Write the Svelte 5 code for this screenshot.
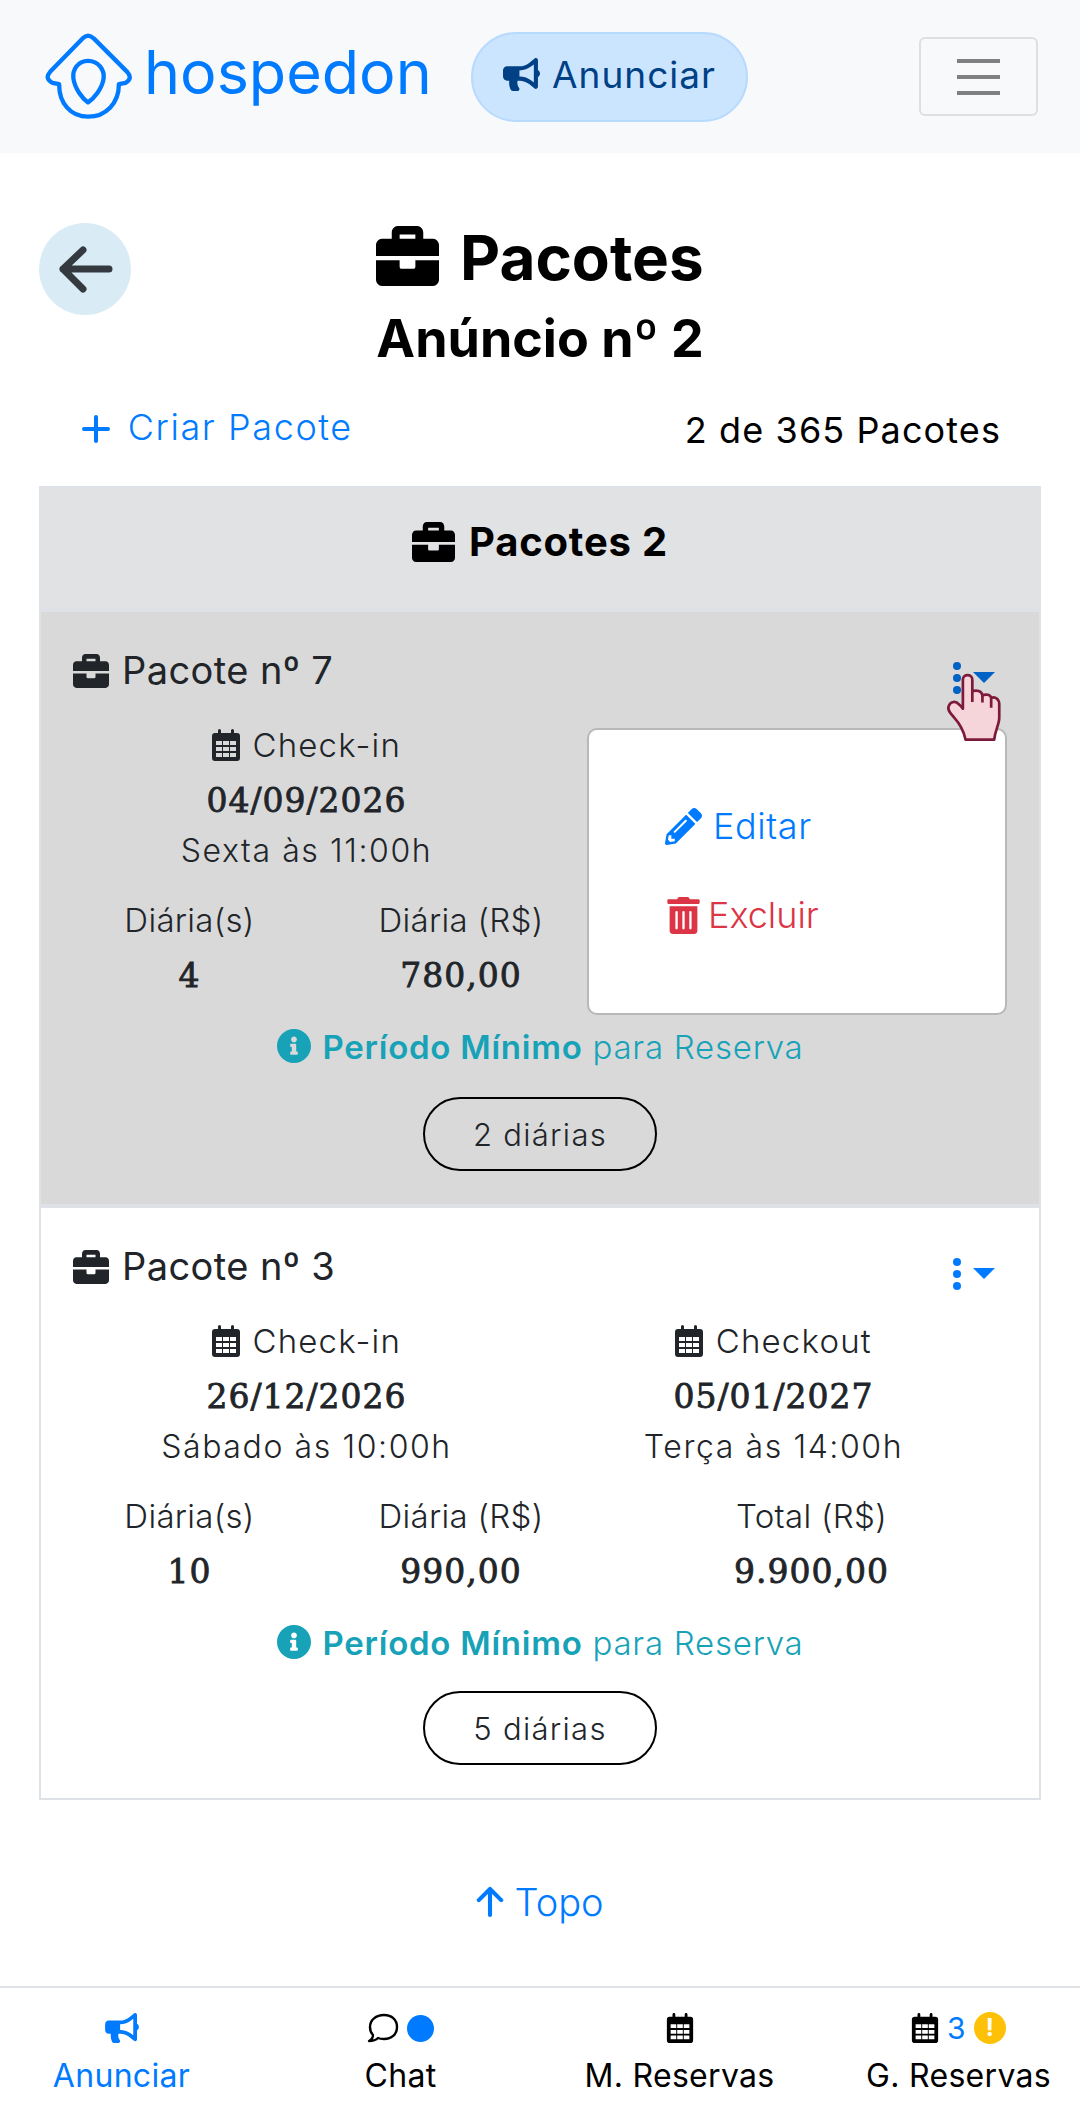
<script>
  const briefcase = "M320 336c0 8.84-7.16 16-16 16h-96c-8.84 0-16-7.16-16-16v-48H0v144c0 25.6 22.4 48 48 48h416c25.6 0 48-22.4 48-48V288H320v48zm144-208h-80V80c0-25.6-22.4-48-48-48H176c-25.6 0-48 22.4-48 48v48H48c-25.6 0-48 22.4-48 48v80h512v-80c0-25.6-22.4-48-48-48zm-144 0H192V96h128v32z";
  const bullhorn = "M576 240c0-23.63-12.95-44.04-32-55.12V32.01C544 23.26 537.02 0 512 0c-7.12 0-14.19 2.38-19.98 7.02l-85.03 68.03C364.28 109.19 310.66 128 256 128H64c-35.35 0-64 28.65-64 64v96c0 35.35 28.65 64 64 64h33.7c-1.39 10.48-2.18 21.14-2.18 32 0 39.77 9.26 77.35 25.56 110.94 5.19 10.69 16.52 17.06 28.4 17.06h74.28c26.05 0 41.69-29.84 25.9-50.56-16.4-21.52-26.15-48.36-26.15-77.44 0-11.11 1.62-21.79 4.41-32H256c54.66 0 108.28 18.81 150.98 52.95l85.03 68.03a32.023 32.023 0 0 0 19.98 7.02c24.92 0 32-22.78 32-32V295.13C563.05 284.04 576 263.63 576 240zm-96 141.42l-33.05-26.44C392.95 311.78 325.12 288 256 288v-96c69.12 0 136.95-23.78 190.95-66.98L480 98.58v282.84z";
  const pencil = "M497.9 142.1l-46.1 46.1c-4.7 4.7-12.3 4.7-17 0l-111-111c-4.7-4.7-4.7-12.3 0-17l46.1-46.1c18.7-18.7 49.1-18.7 67.9 0l60.1 60.1c18.8 18.7 18.8 49.1 0 67.9zM284.2 99.8L21.6 362.4.4 483.9c-2.9 16.4 11.4 30.6 27.8 27.8l121.5-21.3 262.6-262.6c4.7-4.7 4.7-12.3 0-17l-111-111c-4.8-4.7-12.4-4.7-17.1 0zM124.1 339.9c-5.5-5.5-5.5-14.3 0-19.8l154-154c5.5-5.5 14.3-5.5 19.8 0s5.5 14.3 0 19.8l-154 154c-5.5 5.5-14.3 5.5-19.8 0zM88 424h48v36.3l-64.5 11.3-31.1-31.1L51.7 376H88v48z";
  const trash = "M32 464a48 48 0 0 0 48 48h288a48 48 0 0 0 48-48V128H32zm272-256a16 16 0 0 1 32 0v224a16 16 0 0 1-32 0zm-96 0a16 16 0 0 1 32 0v224a16 16 0 0 1-32 0zm-96 0a16 16 0 0 1 32 0v224a16 16 0 0 1-32 0zM432 32H312l-9.4-18.7A24 24 0 0 0 281.1 0H166.8a23.72 23.72 0 0 0-21.4 13.3L136 32H16A16 16 0 0 0 0 48v32a16 16 0 0 0 16 16h416a16 16 0 0 0 16-16V48a16 16 0 0 0-16-16z";
  const info = "M256 8C119.043 8 8 119.083 8 256c0 136.997 111.043 248 248 248s248-111.003 248-248C504 119.083 392.957 8 256 8zm0 110c23.196 0 42 18.804 42 42s-18.804 42-42 42-42-18.804-42-42 18.804-42 42-42zm56 254c0 6.627-5.373 12-12 12h-88c-6.627 0-12-5.373-12-12v-24c0-6.627 5.373-12 12-12h12v-64h-12c-6.627 0-12-5.373-12-12v-24c0-6.627 5.373-12 12-12h64c6.627 0 12 5.373 12 12v100h12c6.627 0 12 5.373 12 12v24z";

  // calendar with pegs and a 3x3 grid of holes, viewBox 0 0 28 32
  let calendar = "M3 4h3V1.5a1.5 1.5 0 0 1 3 0V4h10V1.5a1.5 1.5 0 0 1 3 0V4h3a3 3 0 0 1 3 3v22a3 3 0 0 1-3 3H3a3 3 0 0 1-3-3V7a3 3 0 0 1 3-3z";
  for (const y of [12, 18, 24]) {
    for (const x of [4, 11, 18]) {
      calendar += `M${x} ${y}h6v4h-6z`;
    }
  }

  const pacotes = [
    { id: 7, active: true, inDate: "04/09/2026", inDay: "Sexta às 11:00h", outDate: "08/09/2026", outDay: "Terça às 14:00h", days: "4", rate: "780,00", total: "3.120,00", min: "2 diárias" },
    { id: 3, active: false, inDate: "26/12/2026", inDay: "Sábado às 10:00h", outDate: "05/01/2027", outDay: "Terça às 14:00h", days: "10", rate: "990,00", total: "9.900,00", min: "5 diárias" }
  ];
</script>

<header class="navbar">
  <div class="brand">
    <svg class="logo line" viewBox="40 38 270 265" stroke="#007bff" stroke-width="13" stroke-linejoin="round" stroke-linecap="round">
      <path d="M155 55 Q172 38 190 55 L290 155 Q308 175 285 188 L265 192 C265 250 225 290 172 290 C120 290 85 250 85 192 L65 188 Q40 175 58 155 Z" />
      <path d="M172 122 C140 122 125 150 128 175 C132 205 155 235 172 247 C190 235 215 205 219 175 C222 150 205 122 172 122 Z" />
    </svg>
    <span class="wordmark">hospedon</span>
  </div>
  <button class="announce">
    <svg viewBox="0 0 576 512"><path d={bullhorn} /></svg>
    Anunciar
  </button>
  <button class="toggler" aria-label="Menu"><span></span><span></span><span></span></button>
</header>

<main>
  <section class="title">
    <button class="back" aria-label="Voltar">
      <svg class="line" viewBox="0 0 92 92" stroke="#343a40" stroke-width="7" stroke-linecap="round" stroke-linejoin="round"><path d="M70 46 H24 M44 27 L24 46 L44 66" /></svg>
    </button>
    <h1><svg viewBox="0 32 512 448" preserveAspectRatio="none"><path d={briefcase} /></svg> Pacotes</h1>
    <h2>Anúncio nº 2</h2>
  </section>

  <div class="actions">
    <a href="#criar"><svg class="line" viewBox="0 0 28 28" stroke="currentColor" stroke-width="4" stroke-linecap="round"><path d="M14 2 V26 M2 14 H26" /></svg> Criar Pacote</a>
    <span>2 de 365 Pacotes</span>
  </div>

  <section class="list">
    <div class="list-header">
      <svg viewBox="0 32 512 448" preserveAspectRatio="none"><path d={briefcase} /></svg> Pacotes 2
    </div>
    {#each pacotes as p}
      <article class="item" class:active={p.active}>
        <div class="item-head">
          <h3><svg viewBox="0 32 512 448" preserveAspectRatio="none"><path d={briefcase} /></svg> Pacote nº {p.id}</h3>
          <div class="kebab">
            <span class="dots"><i></i><i></i><i></i></span>
            <span class="caret"></span>
            {#if p.active}
              <svg class="hand" viewBox="85 72 160 202">
                <path d="M132 178 L132 92 C132 74 160 74 160 92 L160 126 C172 122 188 124 190 138 C200 134 214 136 216 146 C228 140 240 150 240 165 L240 205 C240 225 228 240 225 270 L140 270 C135 245 125 225 105 203 C95 192 85 182 90 170 C95 155 112 155 120 165 C126 170 130 175 132 178 Z" fill="#f6d5da" stroke="#7d1a3c" stroke-width="8" stroke-linejoin="round" />
                <path class="crease" d="M160 126 V158 M190 138 V160 M216 146 V175" stroke="#7d1a3c" stroke-width="8" />
              </svg>
            {/if}
          </div>
        </div>

        <div class="dates">
          <div>
            <p class="label"><svg viewBox="0 0 28 32"><path fill-rule="evenodd" d={calendar} /></svg> Check-in</p>
            <p class="value">{p.inDate}</p>
            <p class="day">{p.inDay}</p>
          </div>
          <div>
            <p class="label"><svg viewBox="0 0 28 32"><path fill-rule="evenodd" d={calendar} /></svg> Checkout</p>
            <p class="value">{p.outDate}</p>
            <p class="day">{p.outDay}</p>
          </div>
        </div>

        <div class="prices">
          <div><p class="label">Diária(s)</p><p class="value">{p.days}</p></div>
          <div><p class="label">Diária (R$)</p><p class="value">{p.rate}</p></div>
          <div><p class="label">Total (R$)</p><p class="value">{p.total}</p></div>
        </div>

        <p class="minimum"><svg viewBox="8 8 496 496"><path d={info} /></svg> <b>Período Mínimo</b> para Reserva</p>
        <div class="pill">{p.min}</div>

        {#if p.active}
          <div class="menu">
            <a href="#editar" class="edit"><svg viewBox="0 0 512 512"><path d={pencil} /></svg> Editar</a>
            <a href="#excluir" class="del"><svg viewBox="0 0 448 512"><path d={trash} /></svg> Excluir</a>
          </div>
        {/if}
      </article>
    {/each}
  </section>

  <a class="top" href="#topo"><svg class="line" viewBox="0 0 30 34" stroke="currentColor" stroke-width="4.4" stroke-linecap="round" stroke-linejoin="round"><path d="M15 31 V3 M3 15 L15 3 L27 15" /></svg> Topo</a>
</main>

<nav class="tabs">
  <a href="#a" class="tab current">
    <span class="tab-icons"><svg viewBox="0 0 576 512"><path d={bullhorn} /></svg></span>
    Anunciar
  </a>
  <a href="#c" class="tab">
    <span class="tab-icons">
      <svg class="line chat" viewBox="0 0 32 30" stroke="#000" stroke-width="2.4" stroke-linejoin="round"><path d="M17 2 C9 2 3 7 3 14 C3 17 4 20 6 22 C6 25 4 27 2 28 C6 28 9 27 11 25 C13 26 15 26 17 26 C25 26 30 21 30 14 C30 7 25 2 17 2 Z" /></svg>
      <i class="dot"></i>
    </span>
    Chat
  </a>
  <a href="#m" class="tab">
    <span class="tab-icons"><svg viewBox="0 0 28 32"><path fill-rule="evenodd" d={calendar} /></svg></span>
    M. Reservas
  </a>
  <a href="#g" class="tab">
    <span class="tab-icons">
      <svg viewBox="0 0 28 32"><path fill-rule="evenodd" d={calendar} /></svg>
      <b class="count">3</b>
      <i class="warn">!</i>
    </span>
    G. Reservas
  </a>
</nav>

<style>
  :global(body) {
    margin: 0;
    background: #fff;
    font-family: "Inter", "Noto Sans", sans-serif;
    font-weight: 300;
    color: #212529;
  }
  p, h1, h2, h3 { margin: 0; }
  a { text-decoration: none; color: #007bff; }
  svg { fill: currentColor; }
  svg.line { fill: none; }

  .navbar {
    display: flex;
    align-items: center;
    height: 153px;
    padding: 0 42px 0 44px;
    background: #f8f9fa;
    box-sizing: border-box;
  }
  .brand { display: flex; align-items: center; gap: 10px; width: 387px; color: #007bff; }
  .logo { width: 90px; height: 88px; flex: none; }
  .wordmark { font-size: 61px; font-weight: 400; line-height: 72px; margin-bottom: 10px; }
  .announce {
    display: flex;
    align-items: center;
    justify-content: center;
    gap: 12px;
    margin-left: 40px;
    width: 277px;
    height: 90px;
    padding-bottom: 6px;
    border: 2px solid #b8daff;
    border-radius: 45px;
    background: #cce5ff;
    color: #004085;
    font: inherit;
    font-size: 37px;
    font-weight: 400;
    letter-spacing: 1px;
  }
  .announce svg { width: 37px; height: 33px; }
  .toggler {
    display: flex;
    flex-direction: column;
    align-items: center;
    justify-content: center;
    gap: 12px;
    margin-left: auto;
    width: 119px;
    height: 79px;
    background: transparent;
    border: 2px solid #dfdfdf;
    border-radius: 6px;
  }
  .toggler span { width: 43px; height: 4px; background: #808080; }

  main { padding: 0 39px; }
  .title { position: relative; padding-top: 69px; text-align: center; color: #000; }
  .back {
    position: absolute;
    left: 0;
    top: 70px;
    width: 92px;
    height: 92px;
    padding: 0;
    border: 0;
    border-radius: 50%;
    background: #d9ecf5;
  }
  .back svg { width: 100%; height: 100%; display: block; }
  h1 { font-size: 62px; line-height: 72px; font-weight: 700; }
  h1 svg { width: 63px; height: 60px; vertical-align: -6px; margin-right: 6px; }
  h2 { margin-top: 14px; font-size: 52px; line-height: 62px; font-weight: 700; }

  .actions {
    display: flex;
    justify-content: space-between;
    align-items: center;
    margin-top: 19px;
    padding: 0 40px 0 43px;
    height: 76px;
    font-size: 36px;
  }
  .actions a { letter-spacing: 1.6px; }
  .actions a svg { width: 28px; height: 28px; vertical-align: -3px; margin-right: 6px; }
  .actions span { margin-top: 6px; color: #000; font-weight: 400; font-size: 36px; letter-spacing: 1.1px; }

  .list { margin-top: 21px; border: 2px solid #dee2e6; }
  .list-header {
    height: 120px;
    padding-bottom: 13px;
    box-sizing: border-box;
    display: flex;
    align-items: center;
    justify-content: center;
    gap: 14px;
    background: #e0e2e4;
    color: #000;
    font-size: 40px;
    font-weight: 700;
    letter-spacing: 0.8px;
  }
  .list-header svg { width: 43px; height: 40px; }

  .item {
    position: relative;
    padding: 32px 32px 33px;
    border-top: 4px solid #dee2e6;
  }
  .item.active { background: #d9d9d9; }
  .item-head { display: flex; justify-content: space-between; height: 52px; }
  h3 { font-size: 38px; line-height: 52px; font-weight: 400; letter-spacing: 0.4px; }
  h3 svg { width: 36px; height: 34px; vertical-align: -4px; margin-right: 2px; }
  .kebab { position: relative; display: flex; align-items: flex-start; gap: 12px; color: #007bff; margin-right: 12px; margin-top: 18px; }
  .active .kebab { color: #0062c4; }
  .dots { display: flex; flex-direction: column; gap: 4px; }
  .dots i { width: 8px; height: 8px; border-radius: 50%; background: currentColor; }
  .caret { margin-top: 10px; border: 11px solid transparent; border-top-color: currentColor; border-bottom: 0; }
  .hand { position: absolute; left: -6px; top: 11px; width: 54px; height: 68px; z-index: 3; }
  .crease { fill: none; }

  .dates, .prices { display: grid; text-align: center; }
  .dates { grid-template-columns: 1fr 1fr; margin-top: 27px; }
  .prices { grid-template-columns: 233px 310px 1fr; margin-top: 25px; }
  .label { font-size: 33px; line-height: 44px; letter-spacing: 0.3px; }
  .dates .label { letter-spacing: 1.2px; }
  .label svg { width: 28px; height: 32px; vertical-align: -4px; margin-right: 2px; }
  .value {
    margin-top: 12px;
    font-family: "DejaVu Serif", serif;
    font-weight: 400;
    font-size: 33px;
    line-height: 44px;
    letter-spacing: 1px;
    -webkit-text-stroke: 0.8px #212529;
  }
  .prices .value { margin-top: 12px; }
  .day { margin-top: 6px; font-size: 32px; line-height: 44px; letter-spacing: 1.6px; }

  .minimum { margin-top: 27px; text-align: center; font-size: 33px; line-height: 44px; color: #17a2b8; letter-spacing: 0.75px; }
  .minimum b { font-weight: 600; }
  .minimum svg { width: 34px; height: 34px; vertical-align: -4px; margin-right: 2px; }
  .pill {
    width: 234px;
    height: 74px;
    margin: 26px auto 0;
    display: flex;
    align-items: center;
    justify-content: center;
    box-sizing: border-box;
    border: 2px solid #000;
    border-radius: 37px;
    font-size: 31px;
    letter-spacing: 1.3px;
  }
  .active .pill { margin-top: 28px; }

  .menu {
    position: absolute;
    left: 546px;
    top: 116px;
    width: 420px;
    height: 287px;
    padding: 74px 76px;
    box-sizing: border-box;
    display: flex;
    flex-direction: column;
    gap: 45px;
    background: #fff;
    border: 2px solid #b8b8b8;
    border-radius: 10px;
    font-size: 36px;
  }
  .menu a { display: flex; align-items: center; line-height: 44px; }
  .menu .edit { gap: 11px; letter-spacing: 0.6px; }
  .menu .del { gap: 6px; color: #dc3545; }
  .menu svg { width: 37px; height: 37px; }

  .top {
    display: flex;
    justify-content: center;
    align-items: center;
    gap: 10px;
    margin-top: 79px;
    font-size: 38px;
    line-height: 46px;
  }
  .top svg { width: 28px; height: 34px; }

  .tabs {
    position: fixed;
    left: 0;
    right: 0;
    bottom: 0;
    height: 128px;
    display: grid;
    grid-template-columns: repeat(4, 279px);
    justify-content: center;
    overflow: hidden;
    background: #fff;
    border-top: 2px solid #dee2e6;
    box-sizing: border-box;
  }
  .tab {
    display: flex;
    flex-direction: column;
    align-items: center;
    gap: 12px;
    padding-top: 24px;
    color: #000;
    font-size: 32px;
    font-weight: 400;
    line-height: 40px;
    letter-spacing: 0.3px;
    white-space: nowrap;
  }
  .tab.current { color: #007bff; }
  .tab-icons { display: flex; align-items: center; gap: 8px; height: 32px; }
  .tab-icons svg { height: 30px; width: 28px; }
  .tab-icons .chat { width: 32px; }
  .tab.current .tab-icons svg { width: 34px; }
  .dot { width: 27px; height: 27px; border-radius: 50%; background: #007bff; }
  .count { color: #007bff; font-weight: 400; font-size: 30px; }
  .warn {
    width: 32px;
    height: 32px;
    border-radius: 50%;
    background: #ffc107;
    color: #fff;
    font-style: normal;
    font-weight: 700;
    font-size: 24px;
    line-height: 32px;
    text-align: center;
  }
</style>
